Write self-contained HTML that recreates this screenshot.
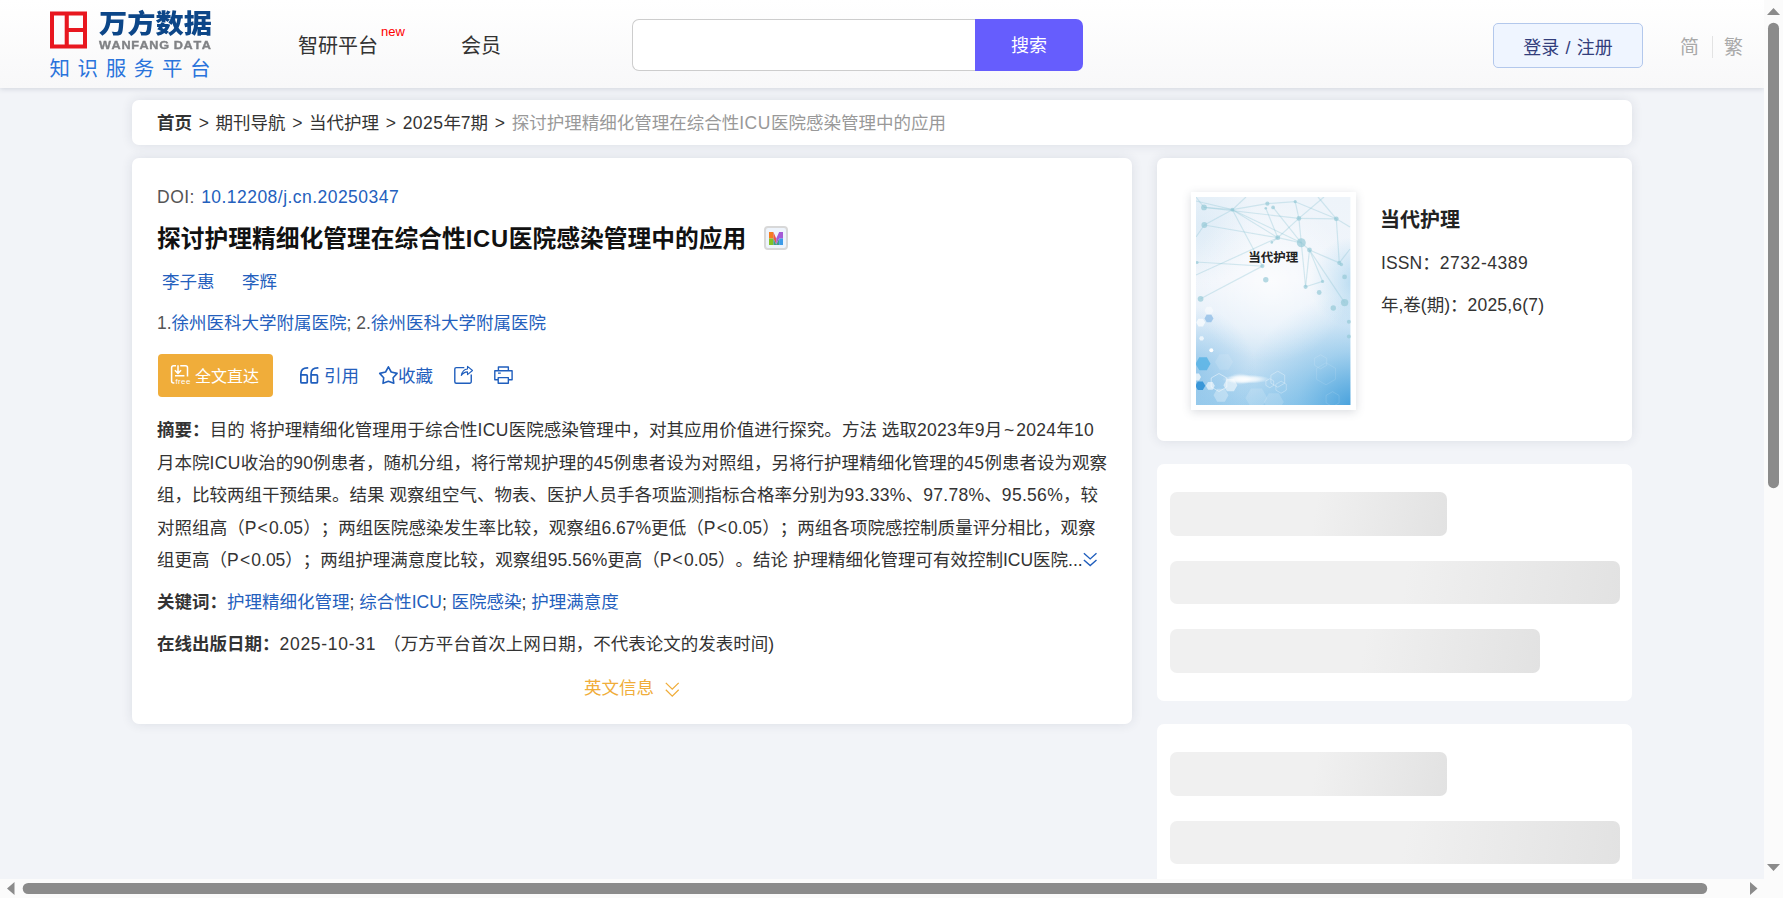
<!DOCTYPE html>
<html lang="zh-CN">
<head>
<meta charset="utf-8">
<title>探讨护理精细化管理在综合性ICU医院感染管理中的应用</title>
<style>
html,body{margin:0;padding:0;}
body{width:1783px;height:898px;overflow:hidden;position:relative;background:#f2f4f8;
 font-family:"Liberation Sans","Noto Sans CJK SC",sans-serif;color:#333;font-size:17.5px;text-spacing-trim:space-all;font-kerning:none;}
.abs{position:absolute;white-space:nowrap;}
#view{position:absolute;left:0;top:0;width:1764px;height:879px;overflow:hidden;background:#f2f4f8;}
#hdr{position:absolute;left:0;top:0;width:1764px;height:88px;background:linear-gradient(#ffffff,#f8f8f9);box-shadow:0 1px 5px rgba(50,60,90,.17);}
.card{position:absolute;background:#fff;border-radius:7px;box-shadow:0 0 12px rgba(40,50,70,.11);}
.nosh{box-shadow:none;}
a{color:inherit;text-decoration:none;}
.lk{color:#2460bd;}
.gt{padding:0 1.8px;}
.ln{text-align:justify;text-align-last:justify;text-justify:inter-character;}
.e{letter-spacing:.3px;}
.p1{padding:0 1.2px;}
.p2{padding:0 1.7px;}
.bar{position:absolute;border-radius:7px;background:linear-gradient(100deg,#f0f0f0 0%,#f0f0f0 52%,#e2e2e2 100%);}
</style>
</head>
<body>
<div id="view">
<!-- HEADER -->
<div id="hdr">
<svg class="abs" style="left:50px;top:11px" width="38" height="38" viewBox="0 0 38 38"><path fill="#e8171f" fill-rule="evenodd" d="M0 .5h37v37H0zM4 4.5v29h10.700v-29zM18.800 4.500v12.500H33V4.500zM18.800 21v12.500H33V21z"/></svg>
<div class="abs" id="lg1" style="left:99px;top:4px;font-size:26px;font-weight:900;color:#0c4688;line-height:40px;transform:scaleX(1.085);transform-origin:0 0;">万方数据</div>
<div class="abs" id="lg2" style="left:99px;top:38px;font-size:10.5px;font-weight:bold;color:#808285;line-height:14px;letter-spacing:0.55px;transform:scaleX(1.204);transform-origin:0 0;-webkit-text-stroke:.35px #808285;">WANFANG DATA</div>
<div class="abs" id="lg3" style="left:49.5px;top:54px;font-size:20.5px;color:#2a74dc;line-height:30px;letter-spacing:7.6px;">知识服务平台</div>
<div class="abs" id="nv1" style="left:298px;top:30.7px;font-size:20px;line-height:30px;color:#333;">智研平台</div>
<div class="abs" id="nvn" style="left:381px;top:24px;font-size:13px;line-height:16px;color:#ff0000;">new</div>
<div class="abs" id="nv2" style="left:461px;top:30.7px;font-size:20px;line-height:30px;color:#333;">会员</div>
<div class="abs" id="sinp" style="left:632px;top:19px;width:343px;height:50px;border:1px solid #cdcdcd;border-right:none;border-radius:7px 0 0 7px;background:#fff;"></div>
<div class="abs" id="sbtn" style="left:975.3px;top:19px;width:107.4px;height:52px;border-radius:0 7px 7px 0;background:#665dfd;color:#fff;font-size:18px;line-height:54px;text-align:center;">搜索</div>
<div class="abs" id="login" style="left:1493px;top:23px;width:148px;height:43px;border:1px solid #b3c8ec;border-radius:5px;background:#eff5ff;color:#333e7c;font-size:18px;line-height:48.5px;text-align:center;">登录<span style="padding:0 1.2px"> / </span>注册</div>
<div class="abs" id="jian" style="left:1680px;top:32.5px;font-size:19px;line-height:30px;color:#a9a9a9;">简</div>
<div class="abs" style="left:1712px;top:36px;width:1px;height:22px;background:#e3e3e3;"></div>
<div class="abs" id="fan" style="left:1724px;top:32.5px;font-size:19px;line-height:30px;color:#a9a9a9;">繁</div>
</div>
<!-- CARDS -->
<div class="card" id="crumb" style="left:132px;top:100px;width:1500px;height:45px;">
<div class="abs" id="bc" style="left:25px;top:8px;font-size:17.5px;line-height:30px;color:#333;"><b>首页</b><span class="gt"> &gt; </span>期刊导航<span class="gt"> &gt; </span>当代护理<span class="gt"> &gt; </span><span style="letter-spacing:.45px">2025</span>年7期<span class="gt"> &gt; </span><span style="color:#999;">探讨护理精细化管理在综合性<span style="letter-spacing:.6px">ICU</span>医院感染管理中的应用</span></div>
</div>
<div class="card" id="main" style="left:132px;top:158px;width:1000px;height:566px;">
<div class="abs" id="doi" style="left:25px;top:24px;font-size:17.5px;line-height:30px;color:#555;"><span style="letter-spacing:.5px">DOI: </span><span class="lk" style="letter-spacing:.46px;padding-left:.8px">10.12208/j.cn.20250347</span></div>
<div class="abs" id="ttl" style="left:25px;top:62.5px;font-size:23.75px;line-height:36px;font-weight:bold;color:#111;">探讨护理精细化管理在综合性<span style="letter-spacing:.7px">ICU</span>医院感染管理中的应用</div>
<div class="abs" id="mic" style="left:632px;top:68px;width:20px;height:20px;border:2px solid #d8d8d8;border-radius:4px;background:#eef4fc;"><svg class="abs" style="left:2.600px;top:4px" width="14.500" height="13" viewBox="0 0 14 12" preserveAspectRatio="none"><path fill="#f57c1f" d="M0 0h4.200v6H0z"/><path fill="#84c225" d="M0 6h4.200v6H0z"/><path fill="#e9584d" d="M4.200 0l2.800 6v5.500L4.200 6z"/><path fill="#3f9c8c" d="M4.200 6L7 11.500 9.800 6v6H4.200z"/><path fill="#a55ad6" d="M9.800 0H14v6H9.800L7 11.500 7 6z"/><path fill="#3d9be9" d="M9.800 6H14v6H9.800z"/></svg></div>
<div class="abs lk" id="au1" style="left:30px;top:109px;font-size:17.5px;line-height:30px;">李子惠</div>
<div class="abs lk" id="au2" style="left:110px;top:109px;font-size:17.5px;line-height:30px;">李辉</div>
<div class="abs lk" id="aff" style="left:25px;top:150px;font-size:17.5px;line-height:30px;"><span style="color:#555">1.</span>徐州医科大学附属医院<span style="color:#555">; 2.</span>徐州医科大学附属医院</div>
<div class="abs" id="ftb" style="left:26px;top:196px;width:115px;height:43px;border-radius:4px;background:#f0ad3a;"></div>
<div class="abs" id="ftt" style="left:63px;top:203.5px;font-size:16px;line-height:30px;color:#fff;">全文直达</div>
<div class="abs lk" id="cite" style="left:192px;top:202.5px;font-size:17.5px;line-height:30px;">引用</div>
<div class="abs lk" id="fav" style="left:266px;top:202.5px;font-size:17.5px;line-height:30px;">收藏</div>
<div id="abs" style="position:absolute;left:25px;top:256px;width:960px;font-size:17.5px;line-height:32.5px;color:#333;white-space:nowrap;">
<div class="ln" id="l1" style="width:937px"><b>摘要：</b>目的 将护理精细化管理用于综合性<span class="e">ICU</span>医院感染管理中，对其应用价值进行探究。方法 选取<span class="e">2023</span>年<span class="e">9</span>月<span class="e"><span class="p2">~</span>2024</span>年<span class="e">10</span></div>
<div class="ln" id="l2" style="width:950px">月本院<span class="e">ICU</span>收治的<span class="e">90</span>例患者，随机分组，将行常规护理的<span class="e">45</span>例患者设为对照组，另将行护理精细化管理的<span class="e">45</span>例患者设为观察</div>
<div class="ln" id="l3" style="width:941px">组，比较两组干预结果。结果 观察组空气、物表、医护人员手各项监测指标合格率分别为<span class="e">93.33%</span>、<span class="e">97.78%</span>、<span class="e">95.56%</span>，较</div>
<div class="ln" id="l4" style="width:938.5px">对照组高（<span class="e0">P<span class="p1">&lt;</span>0.05</span>）；两组医院感染发生率比较，观察组<span class="e0">6.67%</span>更低（<span class="e0">P<span class="p1">&lt;</span>0.05</span>）；两组各项院感控制质量评分相比，观察</div>
<div class="ln" id="l5" style="width:925.5px">组更高（<span class="e0">P<span class="p1">&lt;</span>0.05</span>）；两组护理满意度比较，观察组<span class="e0">95.56%</span>更高（<span class="e0">P<span class="p1">&lt;</span>0.05</span>）。结论 护理精细化管理可有效控制<span class="e0">ICU</span>医院<span class="e0">...</span></div>
</div>
<div class="abs" id="kw" style="left:25px;top:429px;font-size:17.5px;line-height:30px;color:#333;"><b>关键词：</b><span class="lk">护理精细化管理</span>; <span class="lk">综合性ICU</span>; <span class="lk">医院感染</span>; <span class="lk">护理满意度</span></div>
<div class="abs" id="dt" style="left:25px;top:471px;font-size:17.5px;line-height:30px;color:#333;"><b>在线出版日期：</b><span style="letter-spacing:.72px">2025-10-31 </span><span style="padding-left:1.5px">（万方</span>平台首次上网日期，不代表论文的发表时间)</div>
<div class="abs" id="en" style="left:452px;top:515px;font-size:17.5px;line-height:30px;color:#f0ad3a;">英文信息</div>
<svg class="abs" id="icons" style="left:0;top:0;overflow:visible" width="1000" height="566"><g transform="translate(-132,-158)" fill="none" stroke-linecap="round" stroke-linejoin="round">
<g id="ic-free" stroke="#fff" stroke-width="1.500" stroke-linecap="butt"><path d="M176 365.800h-2.400a2 2 0 0 0-2 2v13.100a2 2 0 0 0 2 2h.800M180.200 365.800h5.300a2 2 0 0 1 2 2v8.600M178 365.300v7.600M174.900 370.300l3.100 3.100 3.100-3.100M175 375.700h9.400"/></g>
<g id="ic-quote" stroke="#1f5ebd" stroke-width="1.700"><path d="M307.500 367.900c-4.200 0-6.650 2.200-6.650 6.300v7.700a1 1 0 0 0 1 1h4.400a1 1 0 0 0 1-1v-6a1 1 0 0 0-1-1h-5.400"/><path d="M317.700 367.900c-4.200 0-6.650 2.200-6.650 6.300v7.700a1 1 0 0 0 1 1h4.400a1 1 0 0 0 1-1v-6a1 1 0 0 0-1-1h-5.400"/></g>
<path id="ic-star" stroke="#1f5ebd" stroke-width="1.600" d="M388.400 366.800l2.800 5.200 5.900 1.400-4 4.400.7 5.500-5.400-2-5.400 2 .7-5.500-4-4.400 5.900-1.400z"/>
<g id="ic-share" stroke="#1f5ebd" stroke-width="1.400"><path d="M464.300 367.600h-8a1.500 1.500 0 0 0-1.500 1.500v12.650a1.500 1.500 0 0 0 1.500 1.500h13.450a1.500 1.500 0 0 0 1.500-1.500v-7.300" stroke-linecap="butt"/><path stroke-width="1.100" d="M461.300 375.500c.8-4 3.200-6.300 6.200-6.500v-2.600l5 4.100-5 4.100v-2.700c-2.500.1-4.500 1.100-6.200 3.600z"/></g>
<g id="ic-print" stroke="#1f5ebd" stroke-width="1.400" stroke-linecap="butt"><path d="M498.400 370.500v-3.500h9.950v3.500M498.200 379.700h-3.400v-9h17.300v9h-3.400M498.200 377.600h10.150v5.650h-10.150zM498 373.150h2.800"/></g>
<path id="ic-more" stroke="#1f5ebd" stroke-width="1.400" stroke-linecap="butt" stroke-linejoin="miter" d="M1083.900 553.200l6.300 5.700 6.300-5.700M1083.900 559.900l6.300 5.700 6.300-5.700"/>
<path id="ic-en" stroke="#f0ad3a" stroke-width="1.300" stroke-linecap="butt" stroke-linejoin="miter" d="M665.800 682.900l6.450 6.300 6.450-6.300M665.800 689.800l6.450 6.300 6.450-6.300"/>
</g>
<text x="43.500" y="225.800" font-size="7.900" fill="#fff" style="font-family:'Liberation Sans',sans-serif;letter-spacing:.4px">free</text>
</svg>
</div>
<div class="card" id="side1" style="left:1157px;top:158px;width:475px;height:283px;">
<div class="abs" id="covf" style="left:34px;top:33.600px;width:165px;height:218.800px;background:#fff;box-shadow:0 2px 9px rgba(70,80,100,.2);">
<svg class="abs" id="cov" style="left:5.3px;top:5.3px" width="154.400" height="208.200" viewBox="0 0 154.400 208.200">
<defs>
<linearGradient id="cg0" x1="0" y1="0" x2="0" y2="1"><stop offset="0" stop-color="#eef4fa"/><stop offset=".4" stop-color="#f1f5fb"/><stop offset=".62" stop-color="#e4eff9"/><stop offset=".82" stop-color="#c6e0f3"/><stop offset="1" stop-color="#a2d0ee"/></linearGradient>
<radialGradient id="cg1" cx="158" cy="212" r="115" gradientUnits="userSpaceOnUse"><stop offset="0" stop-color="#3f9cda" stop-opacity=".95"/><stop offset=".5" stop-color="#5aaee2" stop-opacity=".38"/><stop offset="1" stop-color="#6ab6e6" stop-opacity="0"/></radialGradient>
<radialGradient id="cg2" cx="75" cy="85" r="80" gradientUnits="userSpaceOnUse"><stop offset="0" stop-color="#fff" stop-opacity=".7"/><stop offset="1" stop-color="#fff" stop-opacity="0"/></radialGradient>
<radialGradient id="cg3" cx="-5" cy="175" r="65" gradientUnits="userSpaceOnUse"><stop offset="0" stop-color="#78b9e6" stop-opacity=".6"/><stop offset="1" stop-color="#78b9e6" stop-opacity="0"/></radialGradient>
<radialGradient id="cg4" cx="158" cy="85" r="45" gradientUnits="userSpaceOnUse"><stop offset="0" stop-color="#8cc8ea" stop-opacity=".55"/><stop offset="1" stop-color="#8cc8ea" stop-opacity="0"/></radialGradient>
<radialGradient id="cg5" cx="0" cy="30" r="60" gradientUnits="userSpaceOnUse"><stop offset="0" stop-color="#b5d8ee" stop-opacity=".3"/><stop offset="1" stop-color="#b5d8ee" stop-opacity="0"/></radialGradient>
<filter id="cbl" x="-5%" y="-5%" width="110%" height="110%"><feGaussianBlur stdDeviation=".35"/></filter>
<radialGradient id="cg6" cx=".5" cy=".5" r=".5"><stop offset="0" stop-color="#fff" stop-opacity="1"/><stop offset=".5" stop-color="#fff" stop-opacity=".7"/><stop offset="1" stop-color="#fff" stop-opacity="0"/></radialGradient>
</defs>
<rect width="154.400" height="208.200" fill="url(#cg0)"/><rect width="154.400" height="208.200" fill="url(#cg3)"/><rect width="154.400" height="208.200" fill="url(#cg1)"/><rect width="154.400" height="208.200" fill="url(#cg4)"/><rect width="154.400" height="208.200" fill="url(#cg5)"/><rect width="154.400" height="208.200" fill="url(#cg2)"/>
<g stroke="#8cc3d2" stroke-opacity=".34" stroke-width="1.200" fill="none" filter="url(#cbl)">
<path d="M0.0 4.0L36.4 12.7"/>
<path d="M8.0 10.4L36.4 12.7"/>
<path d="M8.3 28.0L36.4 12.7"/>
<path d="M36.4 12.7L71.4 6.7"/>
<path d="M36.4 12.7L81.8 40.7"/>
<path d="M36.4 12.7L66.4 69.1"/>
<path d="M8.3 28.0L81.8 40.7"/>
<path d="M81.8 40.7L105.3 45.8"/>
<path d="M69.8 11.3L81.8 40.7"/>
<path d="M77.1 10.4L105.3 45.8"/>
<path d="M102.9 21.4L81.8 40.7"/>
<path d="M102.9 21.4L105.3 45.8"/>
<path d="M99.2 4.7L102.9 21.4"/>
<path d="M102.9 21.4L140.3 21.8"/>
<path d="M99.2 4.7L140.3 21.8"/>
<path d="M140.3 21.8L122.0 0.0"/>
<path d="M102.9 21.4L128.0 0.0"/>
<path d="M105.3 45.8L113.5 53.0"/>
<path d="M113.5 53.0L143.3 65.9"/>
<path d="M113.5 53.0L109.6 89.8"/>
<path d="M113.5 53.0L126.6 84.4"/>
<path d="M109.6 89.8L126.6 84.4"/>
<path d="M105.3 45.8L109.6 89.8"/>
<path d="M0.0 65.0L66.4 69.1"/>
<path d="M66.4 69.1L4.6 101.8"/>
<path d="M81.8 40.7L0.0 78.0"/>
<path d="M8.3 28.0L0.0 40.0"/>
<path d="M113.5 53.0L148.6 105.6"/>
<path d="M143.3 65.9L154.0 52.0"/>
<path d="M71.4 6.7L99.2 4.7"/>
<path d="M8.0 10.4L0.0 0.0"/>
<path d="M36.4 12.7L50.0 0.0"/>
<path d="M81.8 40.7L75.8 45.4"/>
<path d="M140.3 21.8L154.0 30.0"/>
<path d="M140.3 21.8L143.3 65.9"/>
<path d="M36.4 12.7L105.3 45.8"/>
<path d="M8.0 10.4L102.9 21.4"/>
</g><g fill="#93c9d6" fill-opacity=".68" filter="url(#cbl)">
<circle cx="8.0" cy="10.4" r="2.9"/>
<circle cx="8.3" cy="28.0" r="2.9"/>
<circle cx="36.4" cy="12.7" r="1.9"/>
<circle cx="71.4" cy="6.7" r="2.1"/>
<circle cx="77.1" cy="10.4" r="1.9"/>
<circle cx="69.8" cy="11.3" r="1.3"/>
<circle cx="99.2" cy="4.7" r="1.6"/>
<circle cx="102.9" cy="21.4" r="2.4"/>
<circle cx="140.3" cy="21.8" r="2.4"/>
<circle cx="81.8" cy="40.7" r="2.4"/>
<circle cx="75.8" cy="45.4" r="1.3"/>
<circle cx="105.3" cy="45.8" r="4.5"/>
<circle cx="113.5" cy="53.0" r="2.4"/>
<circle cx="66.4" cy="69.1" r="2.1"/>
<circle cx="69.8" cy="82.8" r="2.7"/>
<circle cx="1.0" cy="65.5" r="1.6"/>
<circle cx="143.3" cy="65.9" r="2.1"/>
<circle cx="145.3" cy="67.5" r="1.8"/>
<circle cx="148.6" cy="79.9" r="2.4"/>
<circle cx="126.6" cy="84.4" r="1.6"/>
<circle cx="109.6" cy="89.8" r="2.1"/>
<circle cx="123.2" cy="95.5" r="2.4"/>
<circle cx="4.6" cy="101.8" r="2.9"/>
<circle cx="148.6" cy="105.6" r="3.7"/>
<circle cx="137.3" cy="111.0" r="2.7"/>
<circle cx="152.9" cy="124.7" r="2.0"/>
<circle cx="152.9" cy="139.4" r="2.0"/>
</g>
<polygon points="9.2,125.6 7.0,129.5 2.5,129.5 0.2,125.6 2.4,121.7 7.0,121.7" fill="#fff" fill-opacity="0.7"/>
<polygon points="17.5,121.4 15.2,125.3 10.8,125.3 8.5,121.4 10.7,117.5 15.2,117.5" fill="#78afe1" fill-opacity="0.6"/>
<polygon points="17.5,113.7 15.2,117.6 10.8,117.6 8.5,113.7 10.7,109.8 15.2,109.8" fill="#fff" fill-opacity="0.45"/>
<polygon points="8.1,141.4 6.8,143.6 4.3,143.6 3.1,141.4 4.3,139.2 6.8,139.2" fill="#fff" fill-opacity="0.7"/>
<polygon points="14.5,166.8 10.8,173.3 3.3,173.3 -0.5,166.8 3.2,160.3 10.8,160.3" fill="#5db5e6" fill-opacity="0.9"/>
<polygon points="5.0,180.0 3.0,183.5 -1.0,183.5 -3.0,180.0 -1.0,176.5 3.0,176.5" fill="#fff" fill-opacity="0.7"/>
<polygon points="9.3,188.8 6.8,193.1 1.8,193.1 -0.7,188.8 1.8,184.5 6.8,184.5" fill="#3a97d8" fill-opacity="1"/>
<polygon points="18.8,188.8 16.6,192.7 12.1,192.7 9.8,188.8 12.0,184.9 16.6,184.9" fill="#fff" fill-opacity="0.6"/>
<polygon points="41.4,188.2 37.9,194.3 30.9,194.3 27.4,188.2 30.9,182.1 37.9,182.1" fill="#fff" fill-opacity="0.55"/>
<polygon points="32.5,198.2 28.8,204.7 21.2,204.7 17.5,198.2 21.2,191.7 28.8,191.7" fill="#fff" fill-opacity="0.3"/>
<polygon points="71.4,200.9 65.9,210.4 54.9,210.4 49.4,200.9 54.9,191.4 65.9,191.4" fill="#fff" fill-opacity="0.15"/>
<polygon points="87.8,204.9 82.8,213.6 72.8,213.6 67.8,204.9 72.8,196.2 82.8,196.2" fill="#fff" fill-opacity="0.15"/>
<polygon points="37.0,165.0 32.5,172.8 23.5,172.8 19.0,165.0 23.5,157.2 32.5,157.2" fill="#fff" fill-opacity="0.12"/>
<polygon points="30.8,190.0 23.0,194.5 15.2,190.0 15.2,181.0 23.0,176.5 30.8,181.0" fill="none" stroke="#fff" stroke-opacity="0.6" stroke-width=".8"/>
<polygon points="88.7,186.2 81.8,190.2 74.9,186.2 74.9,178.2 81.8,174.2 88.7,178.2" fill="none" stroke="#fff" stroke-opacity="0.4" stroke-width=".8"/>
<polygon points="77.7,188.4 73.8,190.7 69.9,188.4 69.9,183.9 73.8,181.7 77.7,183.9" fill="none" stroke="#fff" stroke-opacity="0.4" stroke-width=".8"/>
<polygon points="90.3,193.2 85.1,196.2 79.9,193.2 79.9,187.2 85.1,184.2 90.3,187.2" fill="none" stroke="#fff" stroke-opacity="0.35" stroke-width=".8"/>
<polygon points="130.7,168.3 124.6,171.8 118.5,168.3 118.5,161.3 124.6,157.8 130.7,161.3" fill="none" stroke="#fff" stroke-opacity="0.16" stroke-width=".8"/>
<polygon points="139.5,182.3 130.0,187.8 120.5,182.3 120.5,171.3 130.0,165.8 139.5,171.3" fill="none" stroke="#fff" stroke-opacity="0.14" stroke-width=".8"/>
<polygon points="143.1,205.9 136.6,209.7 130.1,205.9 130.1,198.4 136.6,194.7 143.1,198.4" fill="none" stroke="#fff" stroke-opacity="0.16" stroke-width=".8"/>
<circle cx="15.300" cy="153.200" r="2" fill="#fff"/>
<ellipse cx="50" cy="182.200" rx="24" ry="4.500" fill="url(#cg6)"/><ellipse cx="44" cy="182" rx="12" ry="6" fill="url(#cg6)" fill-opacity=".7"/>
<text x="77.200" y="65.500" text-anchor="middle" font-size="12.500" font-weight="bold" fill="#222" style="font-family:'Liberation Sans','Noto Sans CJK SC',sans-serif">当代护理</text>
</svg>
</div>
<div class="abs" id="jn" style="left:223px;top:46.8px;font-size:20px;line-height:30px;font-weight:bold;color:#222;">当代护理</div>
<div class="abs" id="issn" style="left:224px;top:90px;font-size:17.5px;line-height:30px;color:#333;"><span style="letter-spacing:.1px">ISSN</span>：<span style="letter-spacing:.55px">2732-4389</span></div>
<div class="abs" id="yv" style="left:224px;top:132px;font-size:17.5px;line-height:30px;color:#333;">年,卷(期)：<span style="letter-spacing:.2px">2025,6(7)</span></div>
</div>
<div class="card nosh" id="side2" style="left:1157px;top:464px;width:475px;height:237px;">
<div class="bar" style="left:13px;top:28px;width:277px;height:44px;"></div>
<div class="bar" style="left:13px;top:96.700px;width:450px;height:43px;"></div>
<div class="bar" style="left:13px;top:164.600px;width:370px;height:44px;"></div>
</div>
<div class="card nosh" id="side3" style="left:1157px;top:723.500px;width:475px;height:237px;">
<div class="bar" style="left:13px;top:28.200px;width:277px;height:44px;"></div>
<div class="bar" style="left:13px;top:97.100px;width:450px;height:43px;"></div>
</div>
</div>
<!-- SCROLLBARS -->
<div id="vsb" style="position:absolute;left:1764px;top:0;width:19px;height:879px;background:#fbfbfb;">
<svg class="abs" style="left:0;top:0" width="19" height="879"><path fill="#8b8b8b" d="M3 15l6.500-7 6.500 7zM3 864h13l-6.500 7z"/><rect x="4" y="22.700" width="11" height="465.500" rx="5.500" fill="#8b8b8b"/></svg></div>
<div id="hsb" style="position:absolute;left:0;top:879px;width:1783px;height:19px;background:#fbfbfb;">
<svg class="abs" style="left:0;top:0" width="1783" height="19"><path fill="#8b8b8b" d="M14.500 3v13l-7.500-6.500zM1750 3v13l7.500-6.500z"/><rect x="22.700" y="4" width="1684.500" height="11" rx="5.500" fill="#8b8b8b"/></svg></div>
</body>
</html>
